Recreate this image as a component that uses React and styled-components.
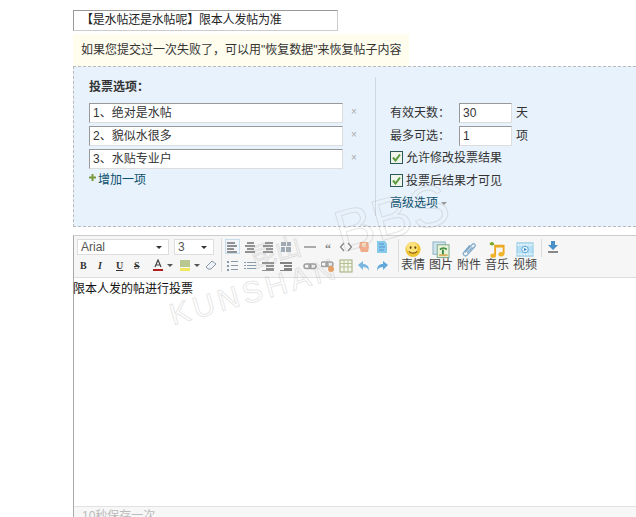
import React from 'react'
import styled, { createGlobalStyle } from 'styled-components'

const GlobalStyle = createGlobalStyle`
  html, body { margin: 0; padding: 0; background: #fff; }
  body { font: 12px "Liberation Sans", "Noto Sans CJK SC", sans-serif; color: #333; }
`

const Page = styled.div`
  position: relative;
  width: 636px;
  height: 517px;
  overflow: hidden;
  padding: 10px 0 0 73px;
  box-sizing: border-box;
`

const TitleInput = styled.div`
  width: 265px;
  height: 21px;
  box-sizing: border-box;
  border: 1px solid #aaa;
  border-color: #999 #ccc #ccc #999;
  padding-left: 7px;
  line-height: 19px;
  letter-spacing: -0.2px;
  color: #222;
`

const Notice = styled.div`
  width: 336px;
  height: 32px;
  margin-top: 3px;
  padding-left: 8px;
  box-sizing: border-box;
  background: #fffdee;
  line-height: 33px;
  color: #333;
`

const VotePanel = styled.div`
  display: flex;
  height: 161px;
  box-sizing: border-box;
  border: 1px dashed #bbb;
  border-right: 0;
  background: #e8f2fc;
  padding: 10px 0 0 15px;
`

const LeftCol = styled.div`
  width: 286px;
  height: 139px;
  border-right: 1px solid #cfd8e0;
`

const PanelTitle = styled.div`
  font-weight: 700;
  line-height: 20px;
  margin-bottom: 6px;
  color: #333;
`

const OptionRow = styled.div`
  display: flex;
  align-items: center;
  height: 20px;
  margin-bottom: 3px;
`

const TextBox = styled.div`
  width: ${p => p.$width}px;
  height: 20px;
  box-sizing: border-box;
  background: #fff;
  border: 1px solid #ccc;
  border-color: #999 #ddd #ddd #999;
  padding-left: 3px;
  line-height: 18px;
  color: #333;
  flex: none;
`

const Remove = styled.span`
  margin: 0 0 3px 8px;
  font-size: 10px;
  color: #aaa;
`

const AddLink = styled.div`
  display: flex;
  align-items: center;
  gap: 2px;
  line-height: 16px;
  color: #0b4f6c;
  svg { margin-bottom: 5px; }
`

const RightCol = styled.div`
  padding: 26px 0 0 14px;
  line-height: 20px;
`

const FieldRow = styled.div`
  display: flex;
  align-items: center;
  height: 20px;
  margin-bottom: 3px;
`

const FieldLabel = styled.span`
  width: 69px;
`

const Unit = styled.span`
  margin-left: 4px;
`

const CheckList = styled.div`
  margin-top: -3px;
`

const CheckRow = styled.div`
  display: flex;
  align-items: center;
  gap: 3px;
  height: 23px;
`

const CheckBox = styled.span`
  display: flex;
  align-items: center;
  justify-content: center;
  width: 13px;
  height: 13px;
  box-sizing: border-box;
  border: 1px solid #2c5a5a;
  background: #f0f5ec;
`

const MoreLink = styled.div`
  display: flex;
  align-items: center;
  gap: 3px;
  margin-top: 1px;
  color: #0b4f6c;
`

const Caret = styled.span`
  width: 0;
  height: 0;
  border: 3px solid transparent;
  border-top-color: ${p => p.$color || '#999'};
  border-bottom-width: 0;
  margin: ${p => p.$margin || 0};
`

const Editor = styled.div`
  display: flex;
  flex-direction: column;
  height: 282px;
  margin-top: 8px;
  box-sizing: border-box;
  border-top: 1px solid #ccc;
  border-left: 1px solid #aaa;
`

const Toolbar = styled.div`
  display: flex;
  height: 42px;
  flex: none;
  box-sizing: border-box;
  background: #f6f6f6;
  border-bottom: 1px solid #ddd;
  padding: 3px 0 0 3px;
`

const FontGroup = styled.div`
  width: 144px;
`

const SelectRow = styled.div`
  display: flex;
  gap: 5px;
`

const Select = styled.div`
  display: flex;
  align-items: center;
  justify-content: space-between;
  width: ${p => p.$width}px;
  height: 16px;
  box-sizing: border-box;
  background: #fff;
  border: 1px solid #ddd;
  padding: 0 6px 0 3px;
  color: #555;
`

const FormatRow = styled.div`
  display: flex;
  align-items: center;
  height: 18px;
  margin-top: 1px;
  padding-left: 3px;
`

const FormatLetter = styled.span`
  width: 18px;
  font: ${p => (p.$italic ? 'italic ' : '')}700 10px "Liberation Serif", serif;
  text-decoration: ${p => p.$line || 'none'};
  color: #333;
`

const IconGrid = styled.div`
  display: grid;
  grid-template-columns: repeat(4, 18px) 6px repeat(5, 18px);
  grid-auto-rows: 18px;
  row-gap: 1px;
  align-content: start;
  padding-left: 1px;
  margin-top: -1px;
  border-left: 1px solid #ddd;
  height: 34px;
  width: 175px;
  > * { margin-top: -1px; }
`

const IconCell = styled.span`
  display: flex;
  align-items: center;
  justify-content: center;
  box-sizing: border-box;
  grid-column: ${p => p.$col};
  opacity: 0.8;
  ${p => p.$active && `
    width: 15px;
    height: 15px;
    place-self: center;
    background: #eef5fb;
    border: 1px solid #bcd8ea;
  `}
`

const MediaGroup = styled.div`
  display: flex;
  height: 33px;
  border-left: 1px solid #ddd;
`

const MediaButton = styled.div`
  display: flex;
  flex-direction: column;
  align-items: center;
  width: 28px;
  font-size: 12px;
  line-height: 14px;
  color: #444;
  svg { margin: 2px 0 0; display: block; }
`

const SaveButton = styled.div`
  margin-left: 2px;
  padding: 2px 0 0 6px;
  height: 16px;
  border-left: 1px solid #ddd;
`

const Content = styled.div`
  flex: 1;
  line-height: 20px;
  padding-top: 1px;
  margin-left: -1px;
  color: #111;
`

const StatusBar = styled.div`
  height: 11px;
  flex: none;
  box-sizing: border-box;
  border-top: 1px solid #e2e2e2;
  background: #f7f7f7;
  padding-left: 8px;
  line-height: 18px;
  color: #bbb;
  overflow: hidden;
`

const Watermark = styled.div`
  position: absolute;
  left: ${p => p.$x}px;
  top: ${p => p.$y}px;
  font: ${p => p.$size}px "Liberation Sans", "Noto Sans CJK SC", sans-serif;
  letter-spacing: ${p => p.$spacing || 0}px;
  color: transparent;
  -webkit-text-stroke: 1px rgba(170, 170, 170, 0.3);
  transform: rotate(-16deg);
  transform-origin: left bottom;
  white-space: nowrap;
  pointer-events: none;
`

const Lines = ({ rows, color = '#777' }) => (
  <svg width="12" height="12" viewBox="0 0 12 12">
    {rows.map(([x, w, y, h], i) => (
      <rect key={i} x={x} y={y} width={w} height={h} fill={color} />
    ))}
  </svg>
)

const Svg12 = ({ children }) => <svg width="14" height="14" viewBox="0 0 14 14">{children}</svg>

const alignLeft = [[1, 8, 1, 2], [1, 10, 4, 2], [1, 7, 7, 2], [1, 10, 10, 2]]
const alignCenter = [[3, 7, 1, 2], [1, 10, 4, 2], [3, 7, 7, 2], [1, 10, 10, 2]]
const alignRight = [[3, 8, 1, 2], [1, 10, 4, 2], [4, 7, 7, 2], [1, 10, 10, 2]]
const floatBox = [[1, 5, 1, 4], [7, 4, 1, 4], [1, 4, 6, 5], [6, 5, 6, 5]]
const listNum = [[1, 2, 1, 2], [5, 7, 1, 1], [1, 2, 5, 2], [5, 7, 5, 1], [1, 2, 9, 2], [5, 7, 9, 1]]
const listDot = [[0, 2, 2, 1], [3, 9, 2, 1], [0, 2, 5, 1], [3, 9, 5, 1], [0, 2, 8, 1], [3, 9, 8, 1]]
const indent = [[0, 12, 2, 2], [4, 8, 5, 2], [4, 8, 8, 2], [0, 12, 10, 1]]

const topIcons = [
  { col: 1, active: true, node: <Lines rows={alignLeft} /> },
  { col: 2, node: <Lines rows={alignCenter} /> },
  { col: 3, node: <Lines rows={alignRight} /> },
  { col: 4, node: <Lines rows={floatBox} color="#8a98a4" /> },
  { col: 6, node: <Lines rows={[[0, 12, 5, 2]]} color="#999" /> },
  { col: 7, node: <span style={{ font: '700 12px "Liberation Serif", serif', color: '#666', marginTop: 5 }}>“</span> },
  { col: 8, node: <Svg12><path d="M5 3 1.5 7 5 11M9 3l3.500 4L9 11" fill="none" stroke="#666" strokeWidth="1.200" /></Svg12> },
  { col: 9, node: <Svg12><path d="M3 2h8l1 5-1 5H4L2 7z" fill="#ef9a72" /><path d="M5 3h4v4H5z" fill="#fbd8b0" /></Svg12> },
  { col: 10, node: <Svg12><path d="M2 1h8l2 3v9H2z" fill="#6cc0ea" /><path d="M4 4h5M4 7h6M4 10h5" stroke="#2f7fc0" /></Svg12> },
]

const bottomIcons = [
  { col: 1, node: <Lines rows={listNum} color="#6d8296" /> },
  { col: 2, node: <Lines rows={listDot} color="#6d8296" /> },
  { col: 3, node: <Lines rows={indent} /> },
  { col: 4, node: <Lines rows={indent} color="#666" /> },
  { col: 6, node: <Svg12><rect x="1" y="5" width="7" height="4.500" rx="2.200" fill="none" stroke="#888" strokeWidth="1.500" /><rect x="6" y="5" width="7" height="4.500" rx="2.200" fill="none" stroke="#888" strokeWidth="1.500" /></Svg12> },
  { col: 7, node: <Svg12><rect x="0" y="3" width="7" height="4.500" rx="2.200" fill="none" stroke="#888" strokeWidth="1.500" /><rect x="5" y="3" width="7" height="4.500" rx="2.200" fill="none" stroke="#888" strokeWidth="1.500" /><circle cx="10" cy="10" r="3" fill="#ec8a3c" /></Svg12> },
  { col: 8, node: <Svg12><rect x="1" y="1" width="12" height="12" fill="#f6f8e8" stroke="#8a9a5c" /><path d="M1 4.500h12M1 8h12M5 2v11M9 2v11" stroke="#a4b27c" /></Svg12> },
  { col: 9, node: <Svg12><path d="M1 6l5-4v3c4 0 6 2 6 7-1-3-3-4-6-4v3z" fill="#5aa8dc" /></Svg12> },
  { col: 10, node: <Svg12><path d="M13 6 8 2v3c-4 0-6 2-6 7 1-3 3-4 6-4v3z" fill="#3e94d4" /></Svg12> },
]

const Smile = () => (
  <svg width="18" height="18" viewBox="0 0 18 18">
    <circle cx="9" cy="9" r="8" fill="#f0c330" />
    <circle cx="8" cy="7" r="6" fill="#fbe27a" />
    <ellipse cx="6.500" cy="7" rx="1" ry="1.500" fill="#6b4a10" />
    <ellipse cx="11.500" cy="7" rx="1" ry="1.500" fill="#6b4a10" />
    <path d="M4.500 11c2.500 2.500 6.500 2.500 9 0" fill="none" stroke="#8a5a10" strokeWidth="1.200" />
  </svg>
)

const Photo = () => (
  <svg width="18" height="18" viewBox="0 0 18 18">
    <rect x="0.500" y="1" width="13" height="13" fill="#cfe3ee" stroke="#8cb0c0" />
    <rect x="5" y="4" width="12.500" height="13.500" fill="#e8f2d8" stroke="#7ba58c" />
    <path d="M11 15V9M8 9c2-2 5-2 7 0" fill="none" stroke="#3e8a3e" strokeWidth="2" />
    <rect x="7" y="14" width="9" height="2" fill="#d8b060" />
  </svg>
)

const Clip = () => (
  <svg width="18" height="18" viewBox="0 0 18 18">
    <path d="M5 12 12.500 3.500c1.500-1.700 4.200 .5 2.700 2.300L7 15c-2 2.200-5.400-.6-3.500-3L10 4.500M7 12.500l5.500-6" fill="none" stroke="#7fa8c8" strokeWidth="1.300" />
  </svg>
)

const Music = () => (
  <svg width="18" height="18" viewBox="0 0 18 18">
    <path d="M6 4h11v10h-2V7H8v9H6z" fill="#eba820" />
    <ellipse cx="5" cy="15.500" rx="3" ry="2.300" fill="#f2b42c" />
    <ellipse cx="13.500" cy="14" rx="3" ry="2.300" fill="#f2b42c" />
    <path d="M1 3c2-3 5-2 5 1-2 1-4 1-5-1z" fill="#7aa82c" />
  </svg>
)

const Video = () => (
  <svg width="18" height="18" viewBox="0 0 18 18">
    <rect x="0.500" y="2" width="17" height="14" fill="#b8e0f4" stroke="#8cc4e0" />
    <path d="M1 4h16M1 14h16" stroke="#e8f6fc" strokeWidth="2" strokeDasharray="2 1" />
    <circle cx="9" cy="9" r="3.500" fill="#e4f4fc" stroke="#5aa4d0" />
    <path d="M8 7.500 11 9l-3 1.500z" fill="#2f7fc0" />
  </svg>
)

const media = [
  { label: '表情', icon: <Smile /> },
  { label: '图片', icon: <Photo /> },
  { label: '附件', icon: <Clip /> },
  { label: '音乐', icon: <Music /> },
  { label: '视频', icon: <Video /> },
]

const options = ['1、绝对是水帖', '2、貌似水很多', '3、水贴专业户']

const Check = () => (
  <CheckBox>
    <svg width="9" height="9" viewBox="0 0 9 9">
      <path d="M1 4.500 3.500 7.500 8 1.500" fill="none" stroke="#5a9a3c" strokeWidth="2" />
    </svg>
  </CheckBox>
)

export default function App() {
  return (
    <>
      <GlobalStyle />
      <Page>
        <TitleInput>【是水帖还是水帖呢】限本人发帖为准</TitleInput>
        <Notice>如果您提交过一次失败了，可以用"恢复数据"来恢复帖子内容</Notice>
        <VotePanel>
          <LeftCol>
            <PanelTitle>投票选项：</PanelTitle>
            {options.map(o => (
              <OptionRow key={o}>
                <TextBox $width={254}>{o}</TextBox>
                <Remove>×</Remove>
              </OptionRow>
            ))}
            <AddLink>
              <svg width="7" height="7" viewBox="0 0 7 7">
                <path d="M3.500 0v7M0 3.500h7" stroke="#7a9a3c" strokeWidth="2" />
              </svg>
              增加一项
            </AddLink>
          </LeftCol>
          <RightCol>
            <FieldRow>
              <FieldLabel>有效天数：</FieldLabel>
              <TextBox $width={53}>30</TextBox>
              <Unit>天</Unit>
            </FieldRow>
            <FieldRow>
              <FieldLabel>最多可选：</FieldLabel>
              <TextBox $width={53}>1</TextBox>
              <Unit>项</Unit>
            </FieldRow>
            <CheckList>
              <CheckRow><Check />允许修改投票结果</CheckRow>
              <CheckRow><Check />投票后结果才可见</CheckRow>
            </CheckList>
            <MoreLink>高级选项 <Caret /></MoreLink>
          </RightCol>
        </VotePanel>
        <Editor>
          <Toolbar>
            <FontGroup>
              <SelectRow>
                <Select $width={92}>Arial<Caret $color="#333" /></Select>
                <Select $width={40}>3<Caret $color="#333" /></Select>
              </SelectRow>
              <FormatRow>
                <FormatLetter>B</FormatLetter>
                <FormatLetter $italic>I</FormatLetter>
                <FormatLetter $line="underline">U</FormatLetter>
                <FormatLetter $line="line-through">S</FormatLetter>
                <svg width="12" height="12" viewBox="0 0 12 12">
                  <path d="M3 8 6 1l3 7M4 6h4" fill="none" stroke="#444" strokeWidth="1.200" />
                  <rect x="1" y="10" width="10" height="2" fill="#b02020" />
                </svg>
                <Caret $color="#555" $margin="0 6px 0 3px" />
                <svg width="12" height="12" viewBox="0 0 12 12">
                  <rect x="1" y="1" width="10" height="7" fill="#b8c890" />
                  <rect x="1" y="9" width="10" height="3" fill="#f2e860" />
                </svg>
                <Caret $color="#555" $margin="0 5px 0 3px" />
                <svg width="12" height="12" viewBox="0 0 12 12">
                  <path d="M1 8 7 2l4 3-5 5H3z" fill="#eef2f6" stroke="#8a9aa8" />
                </svg>
              </FormatRow>
            </FontGroup>
            <IconGrid>
              {topIcons.map(i => (
                <IconCell key={i.col} $col={i.col} $active={i.active}>{i.node}</IconCell>
              ))}
              {bottomIcons.map(i => (
                <IconCell key={i.col} $col={i.col}>{i.node}</IconCell>
              ))}
            </IconGrid>
            <MediaGroup>
              {media.map(m => (
                <MediaButton key={m.label}>{m.icon}{m.label}</MediaButton>
              ))}
            </MediaGroup>
            <SaveButton>
              <svg width="10" height="13" viewBox="0 0 10 13">
                <path d="M3 0h4v4h3L5 9 0 4h3z" fill="#4a90c8" />
                <rect x="0" y="10" width="10" height="2" fill="#888" />
              </svg>
            </SaveButton>
          </Toolbar>
          <Content>限本人发的帖进行投票</Content>
          <StatusBar>10秒保存一次</StatusBar>
        </Editor>
        <Watermark $x={175} $y={298} $size={30} $spacing={4}>KUNSHAN</Watermark>
        <Watermark $x={255} $y={238} $size={26}>昆山</Watermark>
        <Watermark $x={345} $y={198} $size={58}>BBS</Watermark>
      </Page>
    </>
  )
}
